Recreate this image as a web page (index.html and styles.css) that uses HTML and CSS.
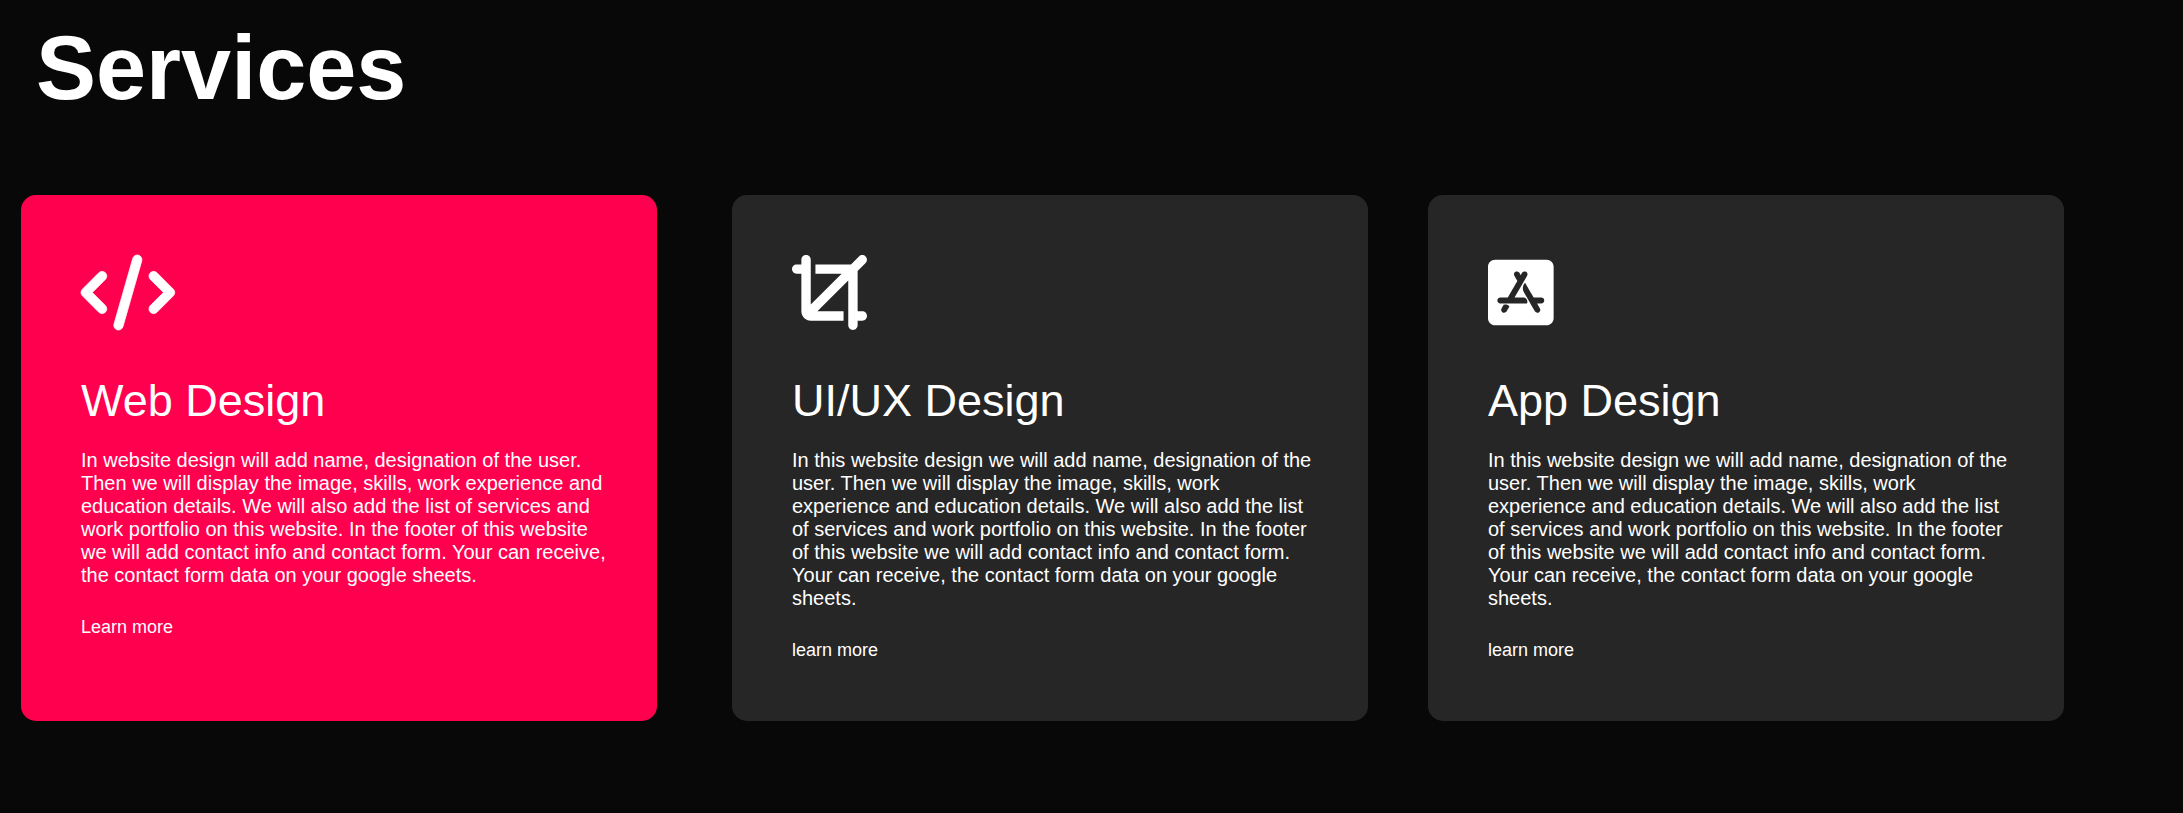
FILE: index.html
```html
<!DOCTYPE html>
<html lang="en">
<head>
  <meta charset="utf-8">
  <meta name="viewport" content="width=device-width, initial-scale=1">
  <title>Services</title>
  <link rel="stylesheet" href="styles.css">
</head>
<body>
  <main class="services">
    <h1 class="services-title">Services</h1>
    <div class="services-list">
      <article class="card card-featured">
        <svg class="icon icon-code" viewBox="0 0 640 512" aria-hidden="true"><path d="M392.8 1.2c-17-4.9-34.7 5-39.6 22l-128 448c-4.9 17 5 34.7 22 39.6s34.7-5 39.6-22l128-448c4.9-17-5-34.7-22-39.6zm80.6 120.1c-12.5 12.5-12.5 32.8 0 45.3L562.7 256l-89.4 89.4c-12.5 12.5-12.5 32.8 0 45.3s32.8 12.5 45.3 0l112-112c12.5-12.5 12.5-32.8 0-45.3l-112-112c-12.5-12.5-32.8-12.5-45.3 0zm-306.7 0c-12.5-12.5-32.8-12.5-45.3 0l-112 112c-12.5 12.5-12.5 32.8 0 45.3l112 112c12.5 12.5 32.8 12.5 45.3 0s12.5-32.8 0-45.3L77.3 256l89.4-89.4c12.5-12.5 12.5-32.8 0-45.3z"/></svg>
        <h2 class="card-title">Web Design</h2>
        <p class="card-text">In website design will add name, designation of the user. Then we will display the image, skills, work experience and education details. We will also add the list of services and work portfolio on this website. In the footer of this website we will add contact info and contact form. Your can receive, the contact form data on your google sheets.</p>
        <a class="card-link" href="#">Learn more</a>
      </article>
      <article class="card">
        <svg class="icon" viewBox="0 0 512 512" aria-hidden="true"><path d="M448 109.3l54.6-54.6c12.5-12.5 12.5-32.8 0-45.3s-32.8-12.5-45.3 0L402.7 64H160v64H338.7L128 338.7V32c0-17.7-14.3-32-32-32S64 14.3 64 32V64H32C14.3 64 0 78.3 0 96s14.3 32 32 32H64V384c0 35.3 28.7 64 64 64H352V384H173.3L384 173.3V480c0 17.7 14.3 32 32 32s32-14.3 32-32V448h32c17.7 0 32-14.3 32-32s-14.3-32-32-32H448V109.3z"/></svg>
        <h2 class="card-title">UI/UX Design</h2>
        <p class="card-text">In this website design we will add name, designation of the user. Then we will display the image, skills, work experience and education details. We will also add the list of services and work portfolio on this website. In the footer of this website we will add contact info and contact form. Your can receive, the contact form data on your google sheets.</p>
        <a class="card-link" href="#">learn more</a>
      </article>
      <article class="card">
        <svg class="icon" viewBox="0 0 448 512" aria-hidden="true"><path d="M400 32H48C21.5 32 0 53.5 0 80v352c0 26.5 21.5 48 48 48h352c26.5 0 48-21.5 48-48V80c0-26.5-21.5-48-48-48zM127 384.5c-5.5 9.6-17.8 12.8-27.3 7.3-9.6-5.5-12.8-17.8-7.3-27.3l14.3-24.7c16.1-4.9 29.3-1.1 39.6 11.4L127 384.5zm138.9-53.9H84c-11 0-20-9-20-20s9-20 20-20h51l65.4-113.2-20.5-35.4c-5.5-9.6-2.2-21.8 7.3-27.3 9.6-5.5 21.8-2.2 27.3 7.3l8.9 15.4 8.9-15.4c5.5-9.6 17.8-12.8 27.3-7.3 9.6 5.5 12.8 17.8 7.3 27.3l-85.8 148.6h62.1c20.2 0 31.5 23.7 22.7 40zm98.1 0h-29l19.6 33.9c5.5 9.6 2.2 21.8-7.3 27.3-9.6 5.5-21.8 2.2-27.3-7.3-32.9-56.9-57.5-99.7-74-128.1-16.7-29-4.8-58 7.1-67.8 13.1 22.7 32.7 56.7 58.9 102h52c11 0 20 9 20 20 0 11.1-9 20-20 20z"/></svg>
        <h2 class="card-title">App Design</h2>
        <p class="card-text">In this website design we will add name, designation of the user. Then we will display the image, skills, work experience and education details. We will also add the list of services and work portfolio on this website. In the footer of this website we will add contact info and contact form. Your can receive, the contact form data on your google sheets.</p>
        <a class="card-link" href="#">learn more</a>
      </article>
    </div>
  </main>
</body>
</html>
```
FILE: styles.css
```css
* {
  box-sizing: border-box;
  margin: 0;
  padding: 0;
}

body {
  background: #080808;
  color: #fff;
  font-family: "Liberation Sans", Arial, sans-serif;
}

.services {
  min-height: 100vh;
  padding: 16px 119px 60px 21px;
}

.services-title {
  padding-left: 15px;
  font-size: 90px;
  font-weight: 700;
  line-height: 104px;
}

.services-list {
  display: flex;
  gap: 60px;
  margin-top: 75px;
}

.card {
  flex: 1;
  padding: 60px 50px 60px 60px;
  border-radius: 15px;
  background: #262626;
}

.card-featured {
  margin-right: 15px;
  background: #ff004f;
}

.icon {
  display: block;
  height: 75px;
  fill: currentColor;
  overflow: visible;
}

.icon-code {
  stroke: currentColor;
  stroke-width: 5;
}

.card-title {
  margin-top: 45px;
  font-size: 45px;
  font-weight: 400;
  line-height: 52px;
}

.card-text {
  margin-top: 22px;
  font-size: 20px;
  line-height: 23px;
}

.card-link {
  display: inline-block;
  margin-top: 30px;
  color: inherit;
  font-size: 18px;
  line-height: 21px;
  text-decoration: none;
}
```
